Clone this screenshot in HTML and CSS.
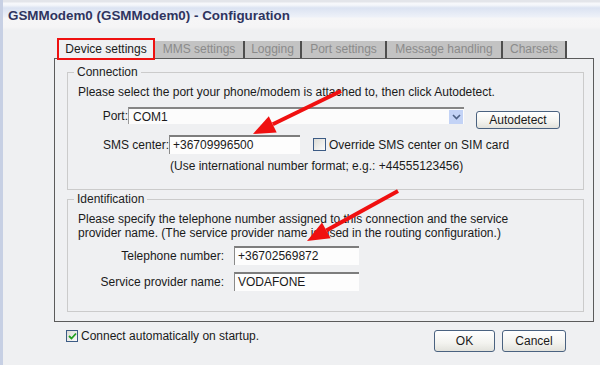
FILE: index.html
```html
<!DOCTYPE html>
<html lang="en">
<head>
  <meta charset="UTF-8" />
  <title>GSMModem0 - Configuration</title>
  <link rel="stylesheet" href="styles.css">
</head>
<body>

  <div class="window">
    <div class="titlebar">GSMModem0 (GSMModem0) - Configuration</div>

    <div class="tabs">
      <div class="tab active t-device">Device settings</div>
      <div class="tab t-mms">MMS settings</div>
      <div class="tab t-log">Logging</div>
      <div class="tab t-port">Port settings</div>
      <div class="tab t-msg">Message handling</div>
      <div class="tab t-char">Charsets</div>
    </div>

    <div class="panel">
      <fieldset class="group connection">
        <legend>Connection</legend>
        <p class="hint">Please select the port your phone/modem is attached to, then click Autodetect.</p>

        <div class="row port-row">
          <label class="lbl port-lbl">Port:</label>
          <div class="select">
            <span class="select-value">COM1</span>
            <span class="drop">
              <svg width="9" height="6" viewBox="0 0 9 6"><path d="M1 1 L4.5 4.5 L8 1" fill="none" stroke="#4d6185" stroke-width="1.6"/></svg>
            </span>
          </div>
          <button class="btn autodetect">Autodetect</button>
        </div>

        <div class="row sms-row">
          <label class="lbl sms-lbl">SMS center:</label>
          <div class="field sms-field">+36709996500</div>
          <span class="check"></span>
          <span class="check-text">Override SMS center on SIM card</span>
        </div>

        <p class="note">(Use international number format; e.g.: +44555123456)</p>
      </fieldset>

      <fieldset class="group identification">
        <legend>Identification</legend>
        <p class="hint">Please specify the telephone number assigned to this connection and the service<br>provider name. (The service provider name is used in the routing configuration.)</p>

        <div class="row id-row">
          <label class="lbl id-lbl">Telephone number:</label>
          <div class="field id-field">+36702569872</div>
        </div>
        <div class="row id-row">
          <label class="lbl id-lbl">Service provider name:</label>
          <div class="field id-field">VODAFONE</div>
        </div>
      </fieldset>
    </div>

    <div class="footer">
      <span class="check checked">
        <svg width="9" height="8" viewBox="0 0 9 8"><path d="M1 4 L3.5 6.5 L8 1.5" fill="none" stroke="#21a121" stroke-width="1.8"/></svg>
      </span>
      <span class="check-text">Connect automatically on startup.</span>
      <div class="buttons">
        <button class="btn ok">OK</button>
        <button class="btn cancel">Cancel</button>
      </div>
    </div>

    <!-- annotation arrows drawn over the dialog -->
    <svg class="arrows" width="600" height="365" viewBox="0 0 600 365">
      <line x1="341" y1="91" x2="272.8" y2="124.3" stroke="#f01010" stroke-width="4"/>
      <polygon points="253,134 276.7,132.4 268.8,116.2" fill="#f01010"/>
      <line x1="398" y1="191" x2="326.3" y2="230.4" stroke="#f01010" stroke-width="4"/>
      <polygon points="307,241 330.6,238.3 322,222.5" fill="#f01010"/>
    </svg>
  </div>

</body>
</html>
```

FILE: styles.css
```css
body {
  margin: 0;
  font-family: 'Liberation Sans', Arial, sans-serif;
  font-size: 12px;
  color: #1a1a1a;
  background: #eff0f2;
}

.window {
  position: relative;
  width: 597px;
  height: 365px;
  overflow: hidden;
  border-left: 3px solid #c7d0e4;
  background: #eff0f2;
}

.titlebar {
  height: 30px;
  padding-left: 5px;
  line-height: 32px;
  font-size: 13.4px;
  font-weight: bold;
  color: #2f3460;
  background: linear-gradient(to bottom, #e3e5ea 0, #e3e5ea 2px, #f7f8fb 3px, #f4f6fa 5px, #dbe3f2 8px, #eef1f8 17px, #f6f6f7 18px, #f5f5f6 27px, #eff0f2 30px);
}

.tabs {
  display: flex;
  align-items: flex-end;
  height: 20px;
  margin: 8px 0 0 54px;
}

.tab {
  flex: none;
  box-sizing: border-box;
  height: 17px;
  line-height: 17px;
  text-align: center;
  background: #c3c3c3;
  color: #8b8b8b;
  border-right: 2px solid #4e4e4e;
}

.tab.active {
  position: relative;
  z-index: 1;
  height: 22px;
  line-height: 19px;
  margin-bottom: -2px;
  background: #eff0f2;
  color: #1a1a1a;
  border: 2px solid #ee1111;
}

.t-device { width: 98px; }
.t-mms { width: 90px; }
.t-log { width: 57px; }
.t-port { width: 85px; }
.t-msg { width: 116px; }
.t-char { width: 64px; }

.panel {
  box-sizing: border-box;
  width: 540px;
  height: 264px;
  margin-left: 51px;
  padding: 6px 9px 0 12px;
  border: 1px solid #5b5b5b;
}

.group {
  margin: 0;
  padding: 0 0 0 10px;
  border: 1px solid #cbcbcb;
  min-width: 0;
}

.group legend {
  margin-left: -4px;
  padding: 0 3px;
  line-height: 14px;
  color: #222;
}

.connection { height: 123px; }

.identification {
  height: 118px;
  margin-top: 2px;
}

.hint {
  margin: 6px 0 0;
  line-height: 14px;
}

.row {
  display: flex;
  align-items: center;
}

.lbl {
  flex: none;
  text-align: right;
}

.port-row {
  align-items: flex-start;
  margin-top: 8px;
}

.port-lbl {
  width: 50px;
  line-height: 18px;
}

.select {
  display: flex;
  align-items: center;
  justify-content: space-between;
  box-sizing: border-box;
  width: 336px;
  height: 17px;
  padding-left: 4px;
  background: #fcfcfc;
  border-top: 2px solid #858585;
  border-left: 1px solid #9a9a9a;
}

.drop {
  display: flex;
  align-items: center;
  justify-content: center;
  width: 14px;
  height: 14px;
  margin-right: 1px;
  background: #c3d3f6;
}

.btn {
  box-sizing: border-box;
  font-family: inherit;
  font-size: 12px;
  color: #1a1a1a;
  padding: 0;
  border: 1px solid #4a6280;
  border-radius: 3px;
  background: linear-gradient(to bottom, #ffffff, #f3f3ef 60%, #e2e2dc);
}

.autodetect {
  width: 84px;
  height: 18px;
  margin: 4px 0 0 12px;
}

.sms-row { margin-top: 6px; }
.sms-lbl { width: 91px; }

.field {
  box-sizing: border-box;
  height: 19px;
  line-height: 17px;
  padding-left: 3px;
  background: #fdfdfd;
  border-top: 2px solid #7d7d7d;
  border-left: 1px solid #8a8a8a;
}

.sms-field { width: 131px; }

.check {
  flex: none;
  display: inline-flex;
  align-items: center;
  justify-content: center;
  box-sizing: border-box;
  width: 13px;
  height: 13px;
  border: 1px solid #3c5b85;
  background: linear-gradient(135deg, #dcdcd6, #fbfbfb);
}

.sms-row .check { margin-left: 13px; }

.check-text { margin-left: 3px; }

.note {
  margin: 5px 0 0 92px;
  line-height: 14px;
}

.id-row { margin-top: 6px; }
.id-row + .id-row { margin-top: 7px; }
.id-lbl { width: 146px; }

.id-field {
  width: 125px;
  margin-left: 10px;
}

.footer {
  display: flex;
  align-items: flex-start;
  margin: 7px 0 0 63px;
}

.footer .check {
  width: 12px;
  height: 12px;
  margin-top: 1px;
}

.footer .check-text { line-height: 14px; }

.buttons {
  display: flex;
  gap: 7px;
  margin: 1px 34px 0 auto;
}

.ok { width: 61px; height: 22px; }
.cancel { width: 64px; height: 22px; }

.arrows {
  position: absolute;
  top: 0;
  left: -3px;
  pointer-events: none;
}
```
